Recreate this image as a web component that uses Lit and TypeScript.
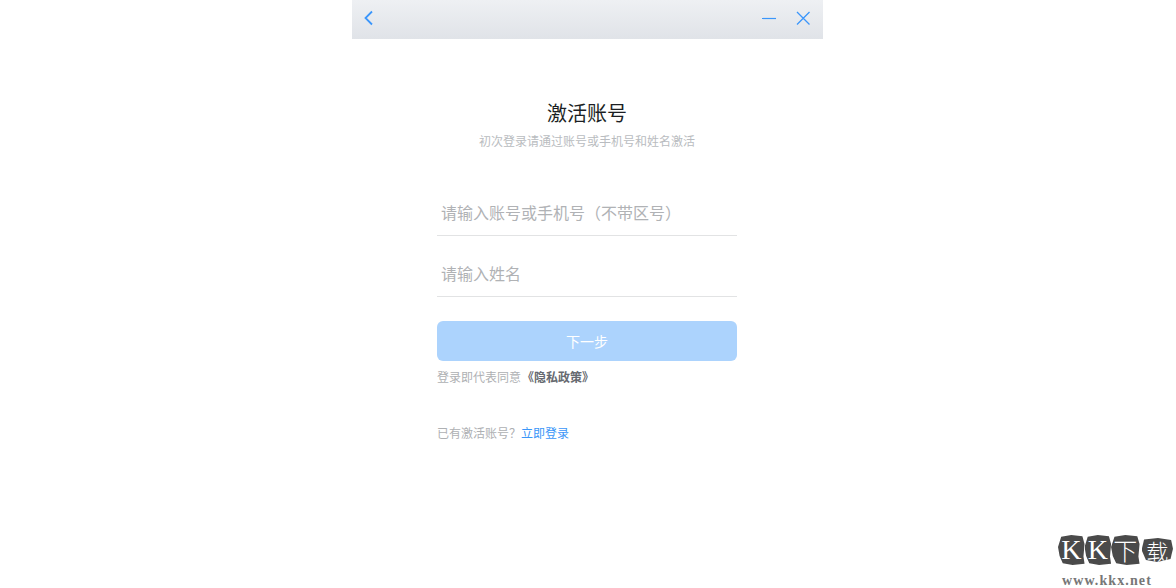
import { LitElement, html, css } from "lit";
import { customElement } from "lit/decorators.js";

@customElement("app-root")
export class AppRoot extends LitElement {
  static styles = css`
    :host {
      display: block;
      position: relative;
      width: 1176px;
      height: 588px;
      overflow: hidden;
      background: #fff;
      font-family: "Noto Sans CJK SC", "Liberation Sans", sans-serif;
    }
    .window {
      width: 471px;
      margin-left: 352px;
      display: flex;
      flex-direction: column;
    }
    .bar {
      height: 39px;
      background: linear-gradient(#eef0f3, #e0e3e8);
      display: flex;
      align-items: center;
      justify-content: space-between;
      padding: 0 12px 4px 11px;
      box-sizing: border-box;
    }
    .bar svg { display: block; }
    .bar .right { display: flex; gap: 18px; align-items: center; }
    .body {
      display: flex;
      flex-direction: column;
      align-items: center;
      padding-top: 60px;
      padding-right: 1px;
    }
    h1 {
      margin: 0;
      font-size: 20px;
      font-weight: 400;
      line-height: 28px;
      color: #1c1f24;
    }
    .sub {
      margin-top: 5px;
      font-size: 12px;
      line-height: 18px;
      color: #b9bcc0;
    }
    form {
      width: 300px;
      margin-top: 31px;
      display: flex;
      flex-direction: column;
    }
    .field {
      height: 55px;
      box-sizing: border-box;
      border-bottom: 1px solid #e2e3e4;
      padding: 7px 5px 0 4px;
      display: flex;
      align-items: center;
      font-size: 16px;
      color: #b0b2b5;
    }
    .field + .field { height: 61px; padding-top: 14px; }
    .next {
      margin-top: 24px;
      height: 40px;
      border-radius: 6px;
      background: #acd3fd;
      color: #fff;
      font-size: 14px;
      display: flex;
      align-items: center;
      justify-content: center;
    }
    .agree {
      margin-top: 7px;
      font-size: 12px;
      line-height: 18px;
      color: #aeb0b3;
    }
    .agree b { color: #666a70; font-weight: 700; margin-left: 1px; }
    .login {
      margin-top: 38px;
      font-size: 12px;
      line-height: 18px;
      color: #aeb0b3;
    }
    .login a { color: #3a96f8; }
    .mark {
      position: absolute;
      left: 1058px;
      top: 535px;
      width: 115px;
      height: 53px;
    }
    .tiles { display: flex; align-items: center; }
    .tile {
      width: 27px;
      height: 30px;
      background: #4a4a4a;
      color: #fff;
      display: flex;
      align-items: center;
      justify-content: center;
      font-size: 28px;
      line-height: 1;
      font-family: "Liberation Serif", "Noto Sans CJK SC", serif;
      clip-path: polygon(12% 6%, 50% 0, 92% 4%, 100% 30%, 96% 72%, 100% 96%, 55% 100%, 18% 94%, 6% 70%, 0 40%);
    }
    .tile.cjk {
      width: 29px;
      font-size: 24px;
      font-family: "Noto Sans CJK SC", sans-serif;
      font-weight: 300;
    }
    .tile.last {
      width: 32px;
      height: 24px;
      margin-left: 2px;
      font-size: 22px;
      clip-path: polygon(8% 6%, 52% 0, 94% 8%, 100% 45%, 92% 88%, 50% 100%, 14% 92%, 0 50%);
    }
    .url {
      position: absolute;
      top: 39px;
      left: 4px;
      white-space: nowrap;
      font-family: "Liberation Serif", serif;
      font-weight: 700;
      font-size: 14px;
      letter-spacing: 1.1px;
      line-height: 14px;
      color: #777;
    }
  `;

  render() {
    return html`
      <div class="window">
        <div class="bar">
          <svg width="11" height="16" viewBox="0 0 11 16" fill="none" stroke="#3b96fb" stroke-width="1.8">
            <path d="M9 1.5L2.5 8L9 14.5" />
          </svg>
          <div class="right">
            <svg width="16" height="16" viewBox="0 0 16 16" fill="none" stroke="#3b96fb" stroke-width="1.2">
              <path d="M1 8.5H15" />
            </svg>
            <svg width="16" height="16" viewBox="0 0 16 16" fill="none" stroke="#3b96fb" stroke-width="1.3">
              <path d="M2 2L14.5 14.5M14.5 2L2 14.5" />
            </svg>
          </div>
        </div>
        <div class="body">
          <h1>激活账号</h1>
          <div class="sub">初次登录请通过账号或手机号和姓名激活</div>
          <form>
            <div class="field">请输入账号或手机号（不带区号）</div>
            <div class="field">请输入姓名</div>
            <div class="next">下一步</div>
            <div class="agree">登录即代表同意<b>《隐私政策》</b></div>
            <div class="login">已有激活账号？<a>立即登录</a></div>
          </form>
        </div>
      </div>
      <div class="mark">
        <div class="tiles">
          <span class="tile">K</span>
          <span class="tile">K</span>
          <span class="tile cjk">下</span>
          <span class="tile cjk last">载</span>
        </div>
        <div class="url">www.kkx.net</div>
      </div>
    `;
  }
}
